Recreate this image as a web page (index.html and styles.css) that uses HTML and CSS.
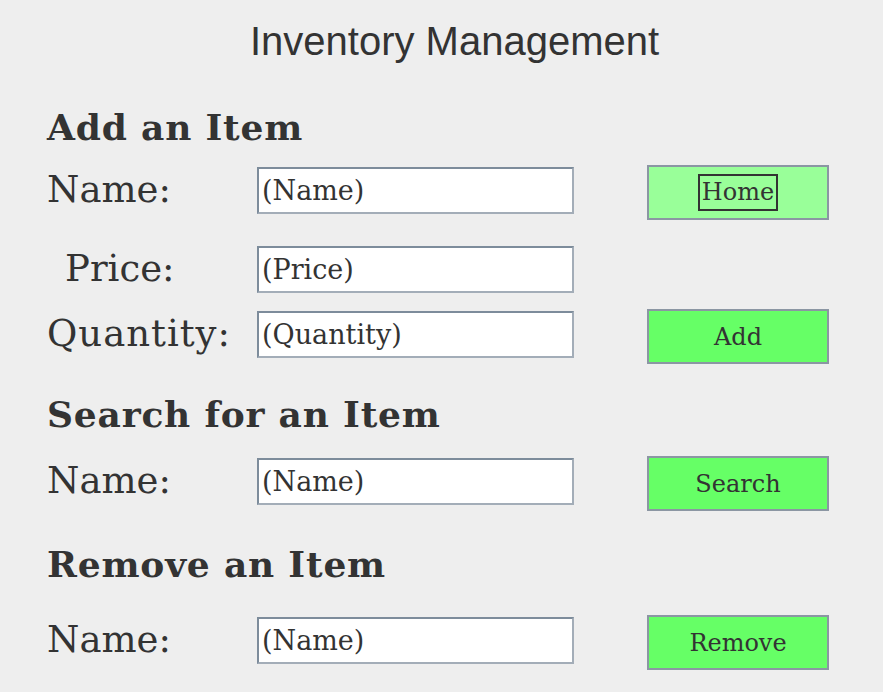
FILE: index.html
```html
<!DOCTYPE html>
<html>
<head>
<meta charset="utf-8">
<title>Inventory Management</title>
<link rel="stylesheet" href="styles.css">
</head>
<body>
<div class="page">
  <h1 class="title">Inventory Management</h1>

  <h2 class="section-title section-title--add">Add an Item</h2>
  <div class="row row--first">
    <label class="label">Name:</label>
    <input class="field" type="text" value="(Name)">
    <button class="btn btn--home"><span class="focus">Home</span></button>
  </div>
  <div class="row row--price">
    <label class="label label--indent">Price:</label>
    <input class="field" type="text" value="(Price)">
  </div>
  <div class="row row--qty">
    <label class="label label--wide">Quantity:</label>
    <input class="field" type="text" value="(Quantity)">
    <button class="btn">Add</button>
  </div>

  <h2 class="section-title section-title--search">Search for an Item</h2>
  <div class="row row--search">
    <label class="label">Name:</label>
    <input class="field" type="text" value="(Name)">
    <button class="btn">Search</button>
  </div>

  <h2 class="section-title section-title--remove">Remove an Item</h2>
  <div class="row row--remove">
    <label class="label">Name:</label>
    <input class="field" type="text" value="(Name)">
    <button class="btn">Remove</button>
  </div>
</div>
</body>
</html>
```

FILE: styles.css
```css
html, body {
  margin: 0;
  padding: 0;
  background: #eeeeee;
}

.page {
  width: 883px;
  height: 692px;
  padding: 18px 0 0 47px;
  box-sizing: border-box;
  overflow: hidden;
  color: #333333;
}

.title {
  margin: 0 0 0 -47px;
  padding-left: 26px;
  font-family: "Liberation Sans", Arial, sans-serif;
  font-weight: normal;
  font-size: 40px;
  line-height: 46px;
  text-align: center;
  color: #333333;
}

.section-title {
  margin: 0;
  font-family: "DejaVu Serif", serif;
  font-weight: bold;
  font-size: 36px;
  line-height: 40px;
  letter-spacing: 0.8px;
  color: #333333;
}

.section-title--add { margin-top: 43px; }
.section-title--search { margin-top: 30px; }
.section-title--remove { margin-top: 33px; }

.row {
  display: flex;
  align-items: flex-start;
  height: 55px;
}

.row--first { margin-top: 18px; }
.row--price { margin-top: 24px; }
.row--qty { margin-top: 10px; }
.row--search { margin-top: 22px; }
.row--remove { margin-top: 31px; }

.label {
  width: 210px;
  flex: none;
  font-family: "DejaVu Serif", serif;
  font-size: 37px;
  line-height: 49px;
  color: #333333;
  white-space: nowrap;
}

.label--wide {
  letter-spacing: 1px;
}

.label--indent {
  padding-left: 18px;
  box-sizing: border-box;
}

.field {
  flex: none;
  width: 317px;
  height: 47px;
  margin: 2px 0 0 0;
  padding: 0 0 0 3px;
  box-sizing: border-box;
  background: #ffffff;
  border-style: solid;
  border-width: 2px;
  border-color: #7d8c9b #a3adb8 #a3adb8 #7d8c9b;
  font-family: "DejaVu Serif", serif;
  font-size: 27px;
  color: #333333;
  outline: none;
}

.btn {
  flex: none;
  width: 182px;
  height: 55px;
  margin-left: 73px;
  padding: 0;
  box-sizing: border-box;
  background: #66ff66;
  border: 2px solid #8b96a3;
  font-family: "DejaVu Serif", serif;
  font-size: 24px;
  color: #333333;
  display: flex;
  align-items: center;
  justify-content: center;
}

.btn--home {
  background: #99ff99;
}

.focus {
  display: inline-block;
  border: 2px solid #333333;
  padding: 2px 2px 3px 2px;
  line-height: 28px;
}
```
